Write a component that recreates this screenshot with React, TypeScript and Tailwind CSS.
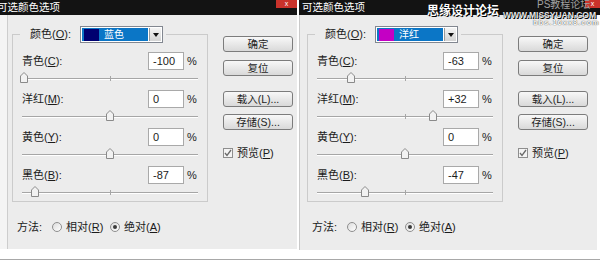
import React from 'react';

type Row = { name: string; key: string; value: number };
type Dlg = { color: string; swatch: string; rows: Row[] };

const dialogs: Dlg[] = [
  {
    color: '蓝色',
    swatch: 'bg-[#000070]',
    rows: [
      { name: '青色', key: 'C', value: -100 },
      { name: '洋红', key: 'M', value: 0 },
      { name: '黄色', key: 'Y', value: 0 },
      { name: '黑色', key: 'B', value: -87 },
    ],
  },
  {
    color: '洋红',
    swatch: 'bg-[#c400c4]',
    rows: [
      { name: '青色', key: 'C', value: -63 },
      { name: '洋红', key: 'M', value: 32 },
      { name: '黄色', key: 'Y', value: 0 },
      { name: '黑色', key: 'B', value: -47 },
    ],
  },
];

const fmt = (v: number) => (v > 0 ? `+${v}` : `${v}`);

function Key({ name, k }: { name: string; k: string }) {
  return (
    <span className="whitespace-nowrap">
      {name}(<span className="underline underline-offset-1">{k}</span>)
    </span>
  );
}

function Slider({ value, last }: { value: number; last?: boolean }) {
  const x = 88 + value * 0.86;
  return (
    <div className={`relative ml-[9px] w-[176px] pt-[8px] ${last ? 'h-[17px]' : 'h-[20px]'}`}>
      <div className="h-px bg-[#a6a6a6]" />
      <div className="h-px bg-white" />
      <div className="absolute left-[88px] top-[6px] w-px h-[5px] bg-[#a6a6a6]" />
      <svg className="absolute top-[2px]" style={{ left: x - 4 }} width="8" height="11" viewBox="0 0 8 11">
        <path d="M0.5 10.5V4L4 0.5L7.5 4V10.5Z" fill="#f2f2f2" stroke="#8a8a8a" />
      </svg>
    </div>
  );
}

function Btn({ children, className = '' }: { children: React.ReactNode; className?: string }) {
  return (
    <div
      className={`h-[16px] w-[70px] rounded-[3px] border border-[#7c7c7c] bg-linear-to-b from-[#f8f8f8] to-[#d9d9d9] flex items-center justify-center text-[10.5px] leading-none text-[#1e1e1e] ${className}`}
    >
      {children}
    </div>
  );
}

function Radio({ checked }: { checked?: boolean }) {
  return (
    <span className="w-[10px] h-[10px] rounded-full border border-[#8e8e8e] bg-linear-to-br from-[#dcdcdc] to-white flex items-center justify-center">
      {checked && <span className="w-[4px] h-[4px] rounded-full bg-[#3a3a3a]" />}
    </span>
  );
}

function Dialog({ d, side }: { d: Dlg; side: 'left' | 'right' }) {
  const left = side === 'left';
  return (
    <div className={`relative flex flex-col ${left ? 'w-[297px]' : 'w-[301px]'}`}>
      {/* title bar */}
      <div className="h-[15px] bg-[#131313] flex items-start overflow-hidden">
        <span className={`${left ? '-ml-[3px]' : 'ml-[3px]'} text-white text-[10.5px] leading-[15px] whitespace-nowrap`}>
          可选颜色选项
        </span>
        <span
          className={`ml-auto h-[8px] bg-[#c9322b] text-white text-[7px] leading-[7px] flex justify-center ${left ? 'w-[21px]' : 'w-[15px]'}`}
        >
          x
        </span>
      </div>

      <div className={`flex ${left ? 'h-[234px]' : 'h-[235px]'}`}>
        {left && <div className="w-[8px] bg-[#f4f4f4] border-r border-[#cdcdcd]" />}
        <div
          className={`flex-1 bg-[#ececec] text-[#1b1b1b] ${left ? 'pl-[4px]' : 'pl-[7px] border-l border-[#c9c9c9] mr-[3px]'}`}
        >
          <div className="flex items-start">
            {/* group box */}
            <div className="mt-[19px] w-[196px] border border-[#cbcbcb]">
              <div className="-mt-[9px] ml-[7px] pl-[10px] pr-[3px] w-fit h-[17px] bg-[#ececec] flex items-center">
                <span className="w-[50px] text-[11px]">
                  <Key name="颜色" k="O" />:
                </span>
                <div className="w-[83px] h-[17px] border border-[#828790] bg-white p-px flex">
                  <div className="flex-1 bg-[#0b76c6] flex items-center">
                    <span className={`ml-[2px] w-[15px] h-[12px] ${d.swatch}`} />
                    <span className="ml-[5px] text-[10px] text-white leading-none">{d.color}</span>
                  </div>
                  <div className="w-[12px] ml-px bg-linear-to-b from-[#f4f4f4] to-[#d4d4d4] border-l border-[#9a9a9a] flex items-center justify-center">
                    <svg width="6" height="4" viewBox="0 0 6 4">
                      <path d="M0 0H6L3 4Z" fill="#111" />
                    </svg>
                  </div>
                </div>
              </div>

              <div className="mt-[9px]">
                {d.rows.map((r, i) => (
                  <div key={r.key}>
                    <div className="flex items-center h-[18px]">
                      <span className="w-[135px] pl-[9px] text-[11px]">
                        <Key name={r.name} k={r.key} />:
                      </span>
                      <div className="w-[36px] h-[18px] border border-[#a9a9a9] bg-white pl-[4px] text-[11px] leading-[16px]">
                        {fmt(r.value)}
                      </div>
                      <span className="ml-[3px] text-[11px]">%</span>
                    </div>
                    <Slider value={r.value} last={i === d.rows.length - 1} />
                  </div>
                ))}
              </div>
            </div>

            {/* buttons */}
            <div className="ml-[15px] mt-[21px] w-[70px] flex flex-col">
              <Btn>确定</Btn>
              <Btn className="mt-[8px]">复位</Btn>
              <Btn className="mt-[15px]">载入(L)...</Btn>
              <Btn className="mt-[7px]">存储(S)...</Btn>
              <div className="mt-[15px] flex items-center gap-[4px] text-[11px]">
                <span className="w-[10px] h-[10px] border border-[#8e8e8e] bg-[#f4f4f4] flex items-center justify-center">
                  <svg width="8" height="8" viewBox="0 0 8 8">
                    <path d="M1 4L3 6.5L7 1" stroke="#6a6a6a" strokeWidth="1.3" fill="none" />
                  </svg>
                </span>
                <Key name="预览" k="P" />
              </div>
            </div>
          </div>

          {/* method */}
          <div className="mt-[18px] ml-[5px] h-[14px] flex items-center text-[11px]">
            <span className="w-[35px]">方法:</span>
            <Radio />
            <span className="ml-[4px] w-[44px]">
              <Key name="相对" k="R" />
            </span>
            <Radio checked />
            <span className="ml-[4px]">
              <Key name="绝对" k="A" />
            </span>
          </div>
        </div>
      </div>

      {!left && (
        <>
          {/* watermark */}
          <span className="absolute left-[128px] top-[5px] text-[12px] font-bold leading-none text-white [text-shadow:0_0_1px_#000,1px_1px_0_#000]">
            思缘设计论坛
          </span>
          <span className="absolute left-[204px] top-[11px] text-[8.5px] font-bold leading-none text-[#e6e6e6] [text-shadow:0_0_1px_#000,1px_1px_0_#000]">
            WWW.MISSYUAN.COM
          </span>
          <span className="absolute left-[238px] top-0 text-[10px] leading-none text-[#a0a0a0]">PS教程论坛</span>
          <span className="absolute left-[234px] top-[19px] text-[7.5px] font-bold leading-none text-white tracking-[1px] [text-shadow:0_0_1px_#000]">
            bbs.16xx8.com
          </span>
        </>
      )}
    </div>
  );
}

export default function App() {
  return (
    <div className="w-[600px] h-[263px] bg-white overflow-hidden font-['Liberation_Sans','Noto_Sans_CJK_SC',sans-serif]">
      <div className="flex gap-[2px]">
        <Dialog d={dialogs[0]} side="left" />
        <Dialog d={dialogs[1]} side="right" />
      </div>
      <div className="mt-[9px] h-px bg-[#a8a8a8]" />
    </div>
  );
}
